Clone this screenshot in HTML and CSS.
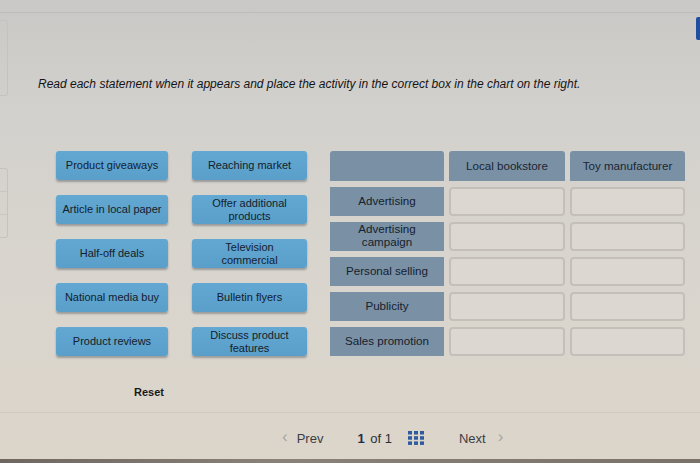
FILE: index.html
```html
<!DOCTYPE html>
<html>
<head>
<meta charset="utf-8">
<link rel="stylesheet" href="styles.css">
</head>
<body>
<div class="screen">
  <div class="topbar"></div>
  <div class="content">
    <div class="rail">
      <div class="rail-box"></div>
      <div class="rail-box rail-box-split"><div class="rail-part"></div><div class="rail-part"></div></div>
    </div>
    <div class="main">
      <p class="instructions">Read each statement when it appears and place the activity in the correct box in the chart on the right.</p>
      <div class="activity">
        <div class="cards">
          <div class="card">Product giveaways</div>
          <div class="card">Reaching market</div>
          <div class="card">Article in local paper</div>
          <div class="card">Offer additional products</div>
          <div class="card">Half-off deals</div>
          <div class="card">Television commercial</div>
          <div class="card">National media buy</div>
          <div class="card">Bulletin flyers</div>
          <div class="card">Product reviews</div>
          <div class="card">Discuss product features</div>
        </div>
        <div class="chart">
          <div class="head"></div>
          <div class="head">Local bookstore</div>
          <div class="head">Toy manufacturer</div>
          <div class="label">Advertising</div><div class="drop"></div><div class="drop"></div>
          <div class="label">Advertising campaign</div><div class="drop"></div><div class="drop"></div>
          <div class="label">Personal selling</div><div class="drop"></div><div class="drop"></div>
          <div class="label">Publicity</div><div class="drop"></div><div class="drop"></div>
          <div class="label">Sales promotion</div><div class="drop"></div><div class="drop"></div>
        </div>
      </div>
      <div class="reset">Reset</div>
    </div>
    <div class="tab"></div>
  </div>
  <div class="footer">
    <div class="pager">
      <span class="chev">&#8249;</span>
      <span class="nav">Prev</span>
      <span class="count"><b>1</b> of 1</span>
      <svg class="grid-icon" width="16" height="14" viewBox="0 0 16 14">
        <rect x="0" y="0" width="4" height="3.5" fill="#2d5b9e"/><rect x="6" y="0" width="4" height="3.5" fill="#2d5b9e"/><rect x="12" y="0" width="4" height="3.5" fill="#2d5b9e"/>
        <rect x="0" y="5.2" width="4" height="3.5" fill="#2d5b9e"/><rect x="6" y="5.2" width="4" height="3.5" fill="#2d5b9e"/><rect x="12" y="5.2" width="4" height="3.5" fill="#2d5b9e"/>
        <rect x="0" y="10.4" width="4" height="3.5" fill="#2d5b9e"/><rect x="6" y="10.4" width="4" height="3.5" fill="#2d5b9e"/><rect x="12" y="10.4" width="4" height="3.5" fill="#2d5b9e"/>
      </svg>
      <span class="nav next">Next</span>
      <span class="chev">&#8250;</span>
    </div>
  </div>
  <div class="bezel"></div>
</div>
</body>
</html>
```

FILE: styles.css
```css
html, body {
  margin: 0;
  padding: 0;
}
body {
  width: 700px;
  height: 463px;
  overflow: hidden;
  font-family: "Liberation Sans", Arial, sans-serif;
}
.screen {
  width: 700px;
  height: 463px;
  display: flex;
  flex-direction: column;
  background: linear-gradient(180deg, #c9c8c6 0%, #d3d1cd 25%, #d9d5ce 60%, #dcd5ca 100%);
}
.topbar {
  height: 12px;
  border-bottom: 1px solid #bdbcba;
  flex: none;
}
.content {
  display: flex;
  flex: none;
  height: 399px;
}
.rail {
  width: 8px;
  flex: none;
  display: flex;
  flex-direction: column;
}
.rail-box {
  margin-top: 7px;
  height: 74px;
  border: 1px solid #c4c3c0;
  border-left: none;
  border-radius: 0 3px 3px 0;
}
.rail-box-split {
  margin-top: 72px;
  height: 68px;
  display: flex;
  flex-direction: column;
}
.rail-part {
  height: 22px;
  border-bottom: 1px solid #c9c6c2;
}
.main {
  flex: 1;
  padding-left: 30px;
}
.instructions {
  margin: 64px 0 0 0;
  font-size: 12px;
  line-height: 14px;
  font-style: italic;
  color: #141416;
}
.activity {
  display: flex;
  margin-top: 60px;
  margin-left: 18px;
  gap: 23px;
}
.cards {
  display: grid;
  grid-template-columns: 112px 115px;
  grid-auto-rows: 29px;
  column-gap: 24px;
  row-gap: 15px;
}
.card {
  background: linear-gradient(180deg, #63a8d2, #5a9fca);
  border-radius: 3px;
  box-shadow: 0 2px 2px rgba(40, 50, 60, 0.35);
  color: #14202c;
  font-size: 11px;
  line-height: 13px;
  display: flex;
  align-items: center;
  justify-content: center;
  text-align: center;
  padding: 0 6px;
}
.chart {
  display: grid;
  grid-template-columns: 114px 116px 115px;
  grid-template-rows: 30px;
  grid-auto-rows: 29px;
  column-gap: 5px;
  row-gap: 6px;
}
.head {
  background: #7a90a5;
  border-radius: 3px 3px 0 0;
  color: #1a2632;
  font-size: 11.6px;
  display: flex;
  align-items: center;
  justify-content: center;
  padding-bottom: 2px;
  box-sizing: border-box;
}
.label {
  background: #7a90a5;
  color: #15212d;
  font-size: 11.6px;
  line-height: 13px;
  display: flex;
  align-items: center;
  justify-content: center;
  text-align: center;
  padding: 0 14px 3px;
}
.drop {
  background: #dcd8d1;
  border: 2px solid #c4c0b9;
  border-radius: 4px;
}
.reset {
  margin: 30px 0 0 96px;
  font-size: 11px;
  font-weight: bold;
  color: #1a1a1a;
}
.tab {
  width: 4px;
  height: 23px;
  margin-top: 4px;
  background: #1f50a0;
  border-radius: 2px 0 0 2px;
  flex: none;
}
.footer {
  flex: 1;
  border-top: 1px solid #cfcac2;
  display: flex;
}
.pager {
  display: flex;
  align-items: center;
  margin: 16px 0 0 282px;
  height: 18px;
  font-size: 13px;
  color: #3a3e44;
}
.chev {
  color: #a6a6a6;
  font-size: 17px;
  line-height: 18px;
  margin-top: -2px;
}
.nav {
  margin-left: 9px;
}
.count {
  margin-left: 34px;
  color: #2a2e36;
}
.count b {
  color: #1d2f50;
  margin-right: 2px;
}
.grid-icon {
  margin-left: 16px;
}
.next {
  margin-left: 35px;
  margin-right: 12px;
}
.bezel {
  height: 4px;
  flex: none;
  background: linear-gradient(90deg, #6e6760, #8a8178 40%, #7a7168);
}
```
